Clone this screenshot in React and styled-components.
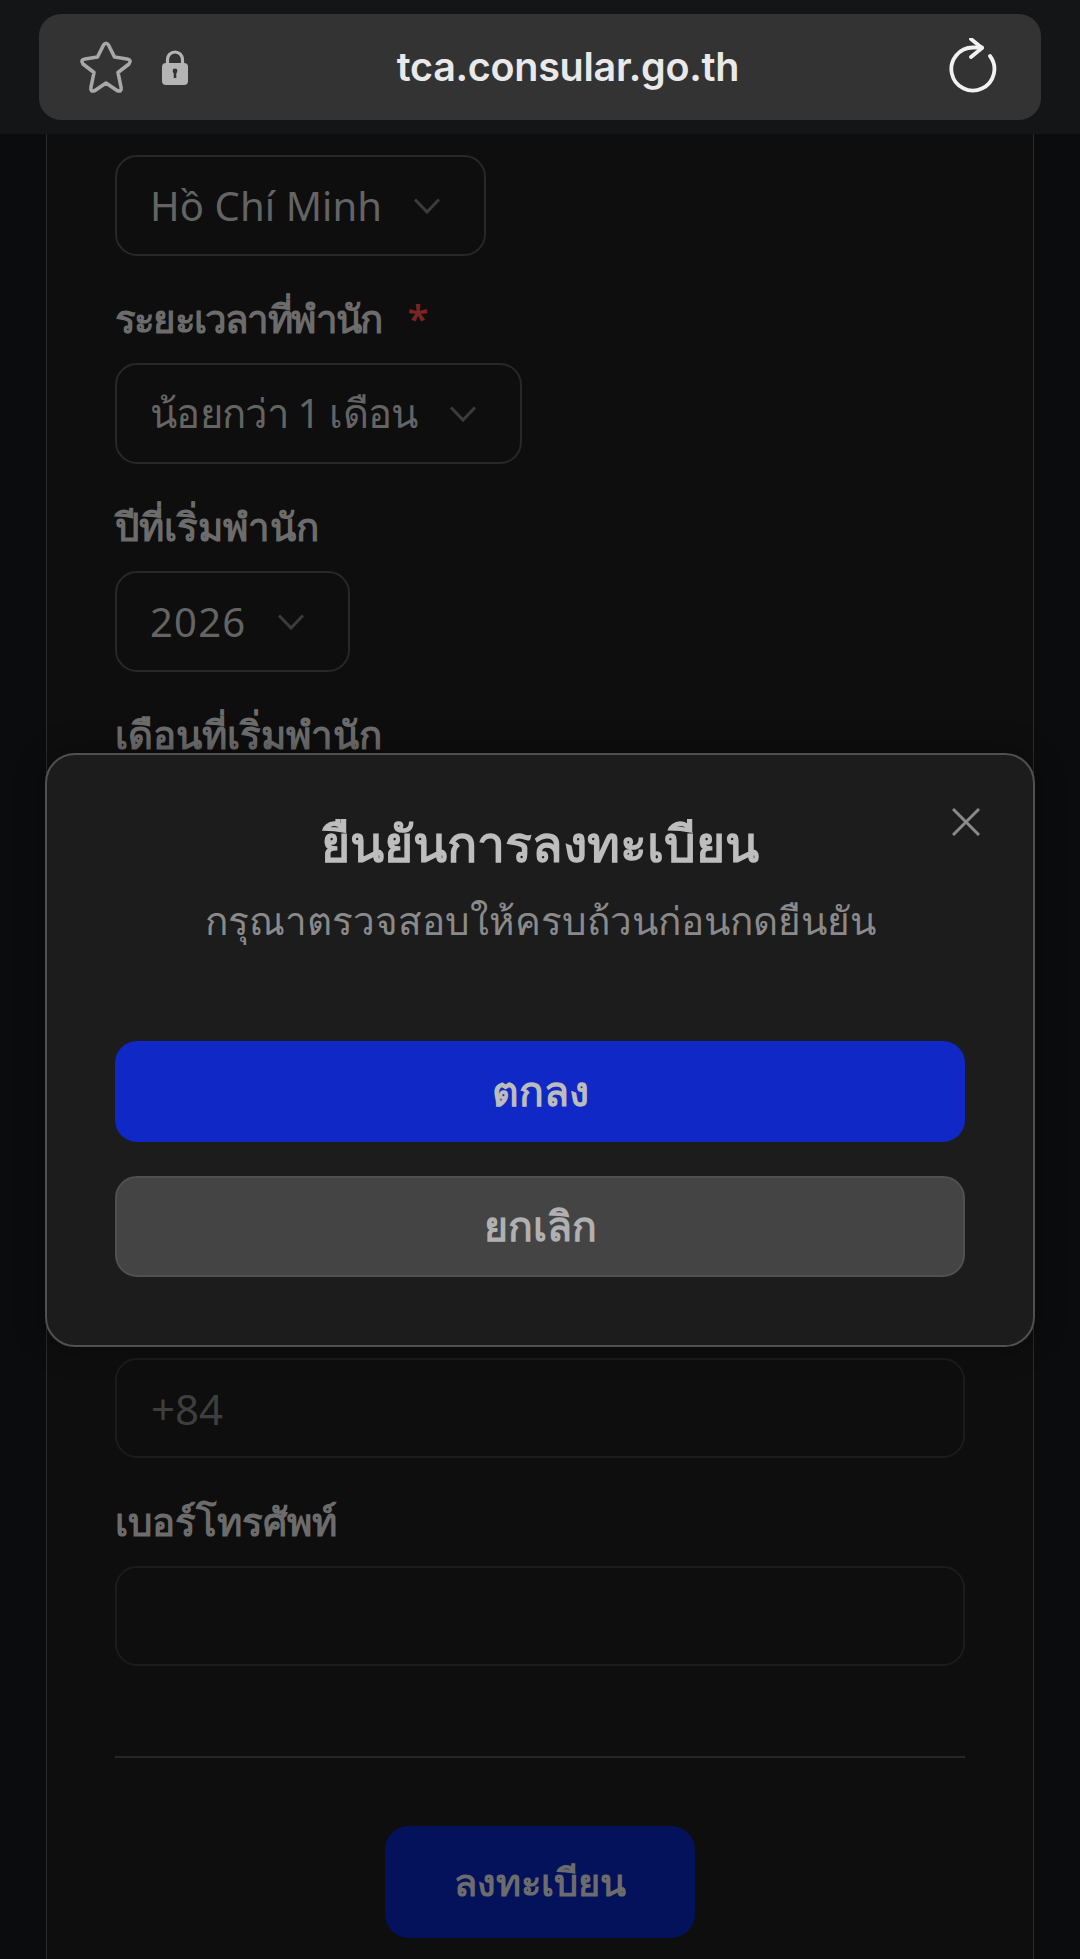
import React from "react";
import styled, { createGlobalStyle } from "styled-components";

const Global = createGlobalStyle`
  html, body { margin: 0; padding: 0; background: #0a0c0e; }
  #root { height: 1959px; overflow: hidden; }
  * { box-sizing: border-box; }
`;

const FONT = `"Noto Sans", Inter, "Noto Sans CJK SC", sans-serif`;

const Page = styled.div`
  width: 1080px;
  height: 1959px;
  display: flex;
  flex-direction: column;
  background: #0a0c0e;
  font-family: ${FONT};
`;
const BrowserBar = styled.header`
  height: 134px;
  flex: none;
  padding: 14px 39px;
  background: #141516;
`;
const UrlPill = styled.div`
  height: 106px;
  border-radius: 22px;
  background: #333333;
  display: grid;
  grid-template-columns: 110px 1fr 110px;
  align-items: center;
  padding: 0 43px 0 39px;
`;
const LeftIcons = styled.div`
  display: flex;
  align-items: center;
  gap: 28px;
`;
const Url = styled.div`
  text-align: center;
  color: #e9e9e9;
  font: 600 39.5px Inter, sans-serif;
  letter-spacing: -0.3px;
  padding-left: 60px;
  white-space: nowrap;
`;
const RightIcon = styled.div`
  display: flex;
  justify-content: flex-end;
`;
const Card = styled.main`
  position: relative;
  flex: 1;
  margin: 0 46px;
  padding: 21px 68px 0 68px;
  background: #0e0e0e;
  border-left: 1px solid #2b2b2b;
  border-right: 1px solid #2b2b2b;
  display: flex;
  flex-direction: column;
`;
const Field = styled.div`
  display: flex;
  flex-direction: column;
  align-items: flex-start;
  margin-top: ${p => p.$top || 0}px;
`;
const Label = styled.label`
  height: 44px;
  line-height: 41px;
  margin-bottom: 21px;
  color: #6c6c6c;
  font-size: 38.5px;
  font-weight: 600;
  white-space: nowrap;
  letter-spacing: ${p => p.$spacing || 0}px;
`;
const Required = styled.span`
  color: #7a2424;
  margin-left: 26px;
`;
const Select = styled.div`
  height: 101px;
  display: inline-flex;
  align-items: center;
  gap: 32px;
  padding: 0 44px 0 33px;
  border: 2px solid #282828;
  border-radius: 22px;
  color: #646464;
  font-size: 40px;
  white-space: nowrap;
  letter-spacing: ${p => p.$spacing || 0}px;
`;
const Input = styled.div`
  width: 100%;
  height: 100px;
  display: flex;
  align-items: center;
  padding: 0 34px;
  border: 2px solid #1c1c1c;
  border-radius: 22px;
  color: #3e3e3e;
  font-size: 42px;
`;
const Divider = styled.hr`
  width: 100%;
  height: 2px;
  margin: 90px 0 68px;
  border: 0;
  background: #262626;
`;
const Submit = styled.div`
  align-self: center;
  width: 310px;
  height: 112px;
  border-radius: 24px;
  background: #04125c;
  color: #6c6c6c;
  display: flex;
  align-items: center;
  justify-content: center;
  font-size: 38px;
  font-weight: 600;
`;
const Modal = styled.section`
  position: absolute;
  left: -2px;
  right: -2px;
  top: 619px;
  height: 594px;
  padding: 58px 68px 0;
  background: #1c1c1c;
  border: 2px solid #505050;
  border-radius: 30px;
  box-shadow: 0 0 30px rgba(0,0,0,.35);
  display: flex;
  flex-direction: column;
  align-items: center;
`;
const Close = styled.div`
  position: absolute;
  top: 53px;
  right: 53px;
  line-height: 0;
`;
const Title = styled.h2`
  margin: 0;
  height: 60px;
  line-height: 60px;
  color: #bdbdbd;
  font-size: 50px;
  font-weight: 700;
  white-space: nowrap;
`;
const Subtitle = styled.p`
  margin: 22px 0 0;
  height: 50px;
  line-height: 50px;
  color: #8a8a8a;
  font-size: 38.7px;
  white-space: nowrap;
`;
const ModalButton = styled.div`
  width: 100%;
  height: 101px;
  margin-top: ${p => p.$top}px;
  border-radius: 22px;
  display: flex;
  align-items: center;
  justify-content: center;
  font-size: 41px;
  font-weight: 600;
  color: ${p => (p.$primary ? "#bcbcbc" : "#b0b0b0")};
  background: ${p => (p.$primary ? "#0f28c6" : "#444444")};
  border: ${p => (p.$primary ? "0" : "2px solid #505050")};
`;

const Chevron = () => (
  <svg width="26" height="16" viewBox="0 0 26 16" fill="none" stroke="#3c3c3c" strokeWidth="3" style={{ flex: "none" }}>
    <path d="M1 1.5 13 14 25 1.5" />
  </svg>
);

export default function App() {
  return (
    <Page>
      <Global />
      <BrowserBar>
        <UrlPill>
          <LeftIcons>
            <svg width="56" height="56" viewBox="0 0 56 56" fill="none" stroke="#a8a8a8" strokeWidth="3.6" strokeLinejoin="round" style={{ flex: "none" }}>
              <path d="M25.5 6Q28 2.5 30.5 6L36.5 18 49 20Q54 21 51 25L40 33.5 43 48Q44 53.5 39 51.5L28 44 17 51.5Q12 53.5 13 48L16 33.5 5 25Q2 21 7 20L19.5 18Z" />
            </svg>
            <svg width="26" height="35" viewBox="0 0 26 35" style={{ flex: "none" }}>
              <path d="M5.5 14V9.5a7.5 7.5 0 0 1 15 0V14" fill="none" stroke="#b4b4b4" strokeWidth="3.2" />
              <rect x="0" y="13" width="26" height="22" rx="4" fill="#b4b4b4" />
              <circle cx="13" cy="21" r="2.4" fill="#333" />
              <path d="M13 21v7" stroke="#333" strokeWidth="2.6" />
            </svg>
          </LeftIcons>
          <Url>tca.consular.go.th</Url>
          <RightIcon>
            <svg width="50" height="58" viewBox="0 0 50 58" fill="none" stroke="#f2f2f2" strokeWidth="3.8" strokeLinecap="round" strokeLinejoin="round">
              <path d="M42 18A21.5 21.5 0 1 1 25 9.5H34" />
              <path d="M23 1 34 10 23 19" />
            </svg>
          </RightIcon>
        </UrlPill>
      </BrowserBar>
      <Card>
        <Field>
          <Select $spacing={0.1}>Hồ Chí Minh<Chevron /></Select>
        </Field>
        <Field $top={42}>
          <Label $spacing={-1.8}>ระยะเวลาที่พำนัก<Required>*</Required></Label>
          <Select $spacing={-0.7}>น้อยกว่า 1 เดือน<Chevron /></Select>
        </Field>
        <Field $top={42}>
          <Label>ปีที่เริ่มพำนัก</Label>
          <Select $spacing={1.2}>2026<Chevron /></Select>
        </Field>
        <Field $top={42}>
          <Label>เดือนที่เริ่มพำนัก</Label>
        </Field>
        <Field $top={579}>
          <Input>+84</Input>
        </Field>
        <Field $top={43}>
          <Label>เบอร์โทรศัพท์</Label>
          <Input />
        </Field>
        <Divider />
        <Submit>ลงทะเบียน</Submit>
        <Modal>
          <Close>
            <svg width="28" height="28" viewBox="0 0 28 28" stroke="#8a8a8a" strokeWidth="3">
              <path d="M1 1 27 27M27 1 1 27" />
            </svg>
          </Close>
          <Title>ยืนยันการลงทะเบียน</Title>
          <Subtitle>กรุณาตรวจสอบให้ครบถ้วนก่อนกดยืนยัน</Subtitle>
          <ModalButton $primary $top={96}>ตกลง</ModalButton>
          <ModalButton $top={34}>ยกเลิก</ModalButton>
        </Modal>
      </Card>
    </Page>
  );
}
